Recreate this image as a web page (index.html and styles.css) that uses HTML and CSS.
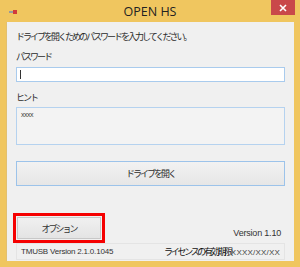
FILE: index.html
```html
<!DOCTYPE html>
<html lang="ja">
    <head>
        <meta charset="UTF-8">
        <title>OPEN HS</title>
        <link rel="stylesheet" href="styles.css">
    </head>
    <body>
        <div class="window">
            <div class="titlebar">
                <span class="app-icon">
                    <svg width="8" height="6" viewBox="0 0 8 6">
                        <rect x="0" y="2" width="4" height="2" fill="#9a9a9a"/>
                        <rect x="4" y="1" width="4" height="4" fill="#d23a3a"/>
                    </svg>
                </span>
                <span class="title">OPEN HS</span>
                <span class="close">
                    <svg width="8" height="8" viewBox="0 0 8 8">
                        <path d="M1 1 L7 7 M7 1 L1 7" stroke="#fff" stroke-width="1.6"/>
                    </svg>
                </span>
            </div>

            <div class="client">
                <p class="intro">ドライブを開くためのパスワードを入力してください。</p>

                <label class="field-label">パスワード</label>
                <div class="input"><span class="caret"></span></div>

                <label class="field-label hint-label">ヒント</label>
                <div class="hint-box">xxxx</div>

                <button class="open-btn">ドライブを開く</button>

                <div class="options-row">
                    <button class="options-btn">オプション</button>
                    <span class="version">Version 1.10</span>
                </div>

                <div class="statusbar">
                    <span>TMUSB Version 2.1.0.1045</span>
                    <span class="license">ライセンスの有効期限<span class="date">XXXX/XX/XX</span></span>
                </div>
            </div>
        </div>
    </body>
</html>
```

FILE: styles.css
```css
body {
    margin: 0;
    padding: 0;
    font-family: "Noto Sans CJK JP", "Liberation Sans", sans-serif;
}

.window {
    width: 300px;
    height: 267px;
    background-color: #f0c65f;
    display: flex;
    flex-direction: column;
}

.titlebar {
    height: 22px;
    display: flex;
    align-items: flex-start;
    position: relative;
}

.app-icon {
    margin: 9px 0 0 9px;
    display: flex;
}

.title {
    position: absolute;
    left: 0;
    right: 0;
    top: 4px;
    text-align: center;
    font-family: "Open Sans", "Liberation Sans", sans-serif;
    font-size: 12.5px;
    line-height: 16px;
    color: #222;
}

.close {
    margin-left: auto;
    margin-right: 5px;
    width: 24px;
    height: 15px;
    background-color: #c9484a;
    display: flex;
    align-items: center;
    justify-content: center;
}

.client {
    flex: 1;
    margin: 0 6px 6px 6px;
    background-color: #f0f0f0;
    border-left: 1px solid #e2c070;
    padding: 0 9px 0 9px;
    display: flex;
    flex-direction: column;
    color: #2a2a2a;
    font-size: 9px;
    letter-spacing: -2px;
}

.intro {
    margin: 9px 0 0 0;
    line-height: 12px;
}

.field-label {
    margin-top: 8px;
    line-height: 12px;
}

.hint-label {
    margin-top: 10px;
}

.input {
    margin-top: 4px;
    height: 13px;
    background-color: #fff;
    border: 1px solid #a9cbed;
    display: flex;
    align-items: center;
}

.caret {
    width: 1px;
    height: 9px;
    margin-left: 3px;
    background-color: #333;
}

.hint-box {
    margin-top: 3px;
    border: 1px solid #b5d2ef;
    background-color: #f3f3f3;
    font-family: "Liberation Sans", sans-serif;
    font-size: 7px;
    letter-spacing: -0.5px;
    line-height: 10px;
    padding: 2px 4px;
    box-sizing: border-box;
    height: 38px;
    color: #444;
}

.open-btn {
    margin-top: 16px;
    height: 25px;
    border: 1px solid #9cc3ea;
    background: linear-gradient(#f2f2f2, #e6e6e6);
    font-family: inherit;
    font-size: 9px;
    letter-spacing: -2px;
    color: #2a2a2a;
    padding: 0;
}

.options-row {
    margin-top: 31px;
    display: flex;
    align-items: flex-end;
    justify-content: space-between;
}

.options-btn {
    width: 84px;
    height: 22px;
    margin-left: 1px;
    border: 1px solid #c8c8c8;
    background: linear-gradient(#f0f0f0, #e4e4e4);
    font-family: inherit;
    font-size: 9px;
    letter-spacing: -2px;
    color: #333;
    padding: 0;
    outline: 3px solid #f50000;
    outline-offset: 1px;
}

.version {
    font-family: "Liberation Sans", sans-serif;
    font-size: 9px;
    letter-spacing: -0.2px;
    color: #333;
    margin-right: 4px;
    margin-bottom: 1px;
}

.statusbar {
    margin-top: 4px;
    height: 15px;
    border: 1px solid #e4e4e4;
    display: flex;
    align-items: center;
    justify-content: space-between;
    padding: 0 4px;
    font-family: "Liberation Sans", sans-serif;
    font-size: 8px;
    letter-spacing: -0.2px;
    color: #333;
}

.license {
    font-family: "Noto Sans CJK JP", sans-serif;
    font-size: 9px;
    letter-spacing: -2.3px;
    color: #111;
}

.date {
    font-family: "Liberation Sans", sans-serif;
    font-size: 8px;
    letter-spacing: 0.2px;
    color: #444;
}
```
